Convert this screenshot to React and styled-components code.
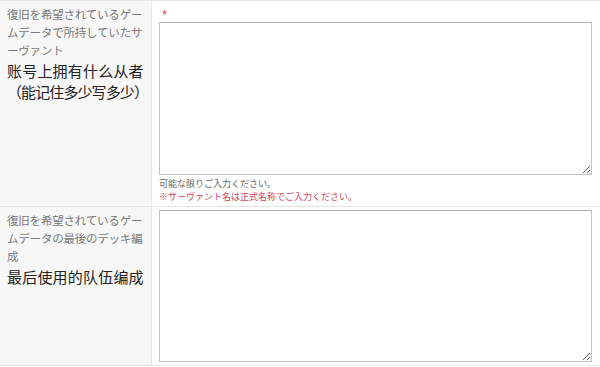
import styled, { createGlobalStyle } from "styled-components";

const GlobalStyle = createGlobalStyle`
  body {
    margin: 0;
    background: #fff;
    font-family: "Liberation Sans", "Noto Sans CJK JP", sans-serif;
  }
`;

const Table = styled.div`
  width: 600px;
  border-top: 1px solid #e6e6e6;
  border-bottom: 1px solid #e6e6e6;
`;

const Row = styled.div`
  display: grid;
  grid-template-columns: 152px 1fr;
  border-top: ${(p) => (p.first ? "none" : "1px solid #e6e6e6")};
  height: ${(p) => p.h}px;
`;

const Label = styled.div`
  background: #f7f7f7;
  border-right: 1px solid #e8e8e8;
  padding: 4px 2px 0 7px;
`;

const Jp = styled.div`
  font-family: "Noto Sans CJK JP", sans-serif;
  font-size: 11.5px;
  line-height: 18px;
  color: #777;
  letter-spacing: -0.2px;
  white-space: nowrap;
`;

const Zh = styled.div`
  font-family: "Noto Sans CJK SC", sans-serif;
  font-size: 15px;
  line-height: 19px;
  color: #222;
  margin-top: 2px;
  white-space: nowrap;
  letter-spacing: ${(p) => p.tight ? "-0.9px" : "0.2px"};
`;

const Field = styled.div`
  padding: ${(p) => p.pad};
  display: flex;
  flex-direction: column;
`;

const Required = styled.span`
  color: #d04a5e;
  font-size: 13px;
  line-height: 12px;
  height: 11px;
  margin: 0 0 2px 3px;
`;

const Area = styled.textarea`
  display: block;
  width: 433px;
  height: ${(p) => p.h}px;
  box-sizing: border-box;
  border: 1px solid #c4c4c4;
  border-top-color: #b4b4b4;
  background: #fff;
  resize: vertical;
  margin: 0;
`;

const Note = styled.div`
  font-family: "Noto Sans CJK JP", sans-serif;
  font-size: 9px;
  line-height: 13px;
  color: ${(p) => (p.red ? "#d0485a" : "#666")};
`;

export default function App() {
  return (
    <>
      <GlobalStyle />
      <Table>
        <Row first h={205}>
          <Label>
            <Jp>復旧を希望されているゲー</Jp>
            <Jp>ムデータで所持していたサ</Jp>
            <Jp>ーヴァント</Jp>
            <Zh>账号上拥有什么从者</Zh>
            <Zh tight>（能记住多少写多少）</Zh>
          </Label>
          <Field pad="8px 0 0 7px">
            <Required>*</Required>
            <Area h={153} />
            <Note style={{ marginTop: 2 }}>可能な限りご入力ください。</Note>
            <Note red>※サーヴァント名は正式名称でご入力ください。</Note>
          </Field>
        </Row>
        <Row h={158}>
          <Label>
            <Jp>復旧を希望されているゲー</Jp>
            <Jp>ムデータの最後のデッキ編</Jp>
            <Jp>成</Jp>
            <Zh>最后使用的队伍编成</Zh>
          </Label>
          <Field pad="3px 0 0 7px">
            <Area h={152} />
          </Field>
        </Row>
      </Table>
    </>
  );
}
